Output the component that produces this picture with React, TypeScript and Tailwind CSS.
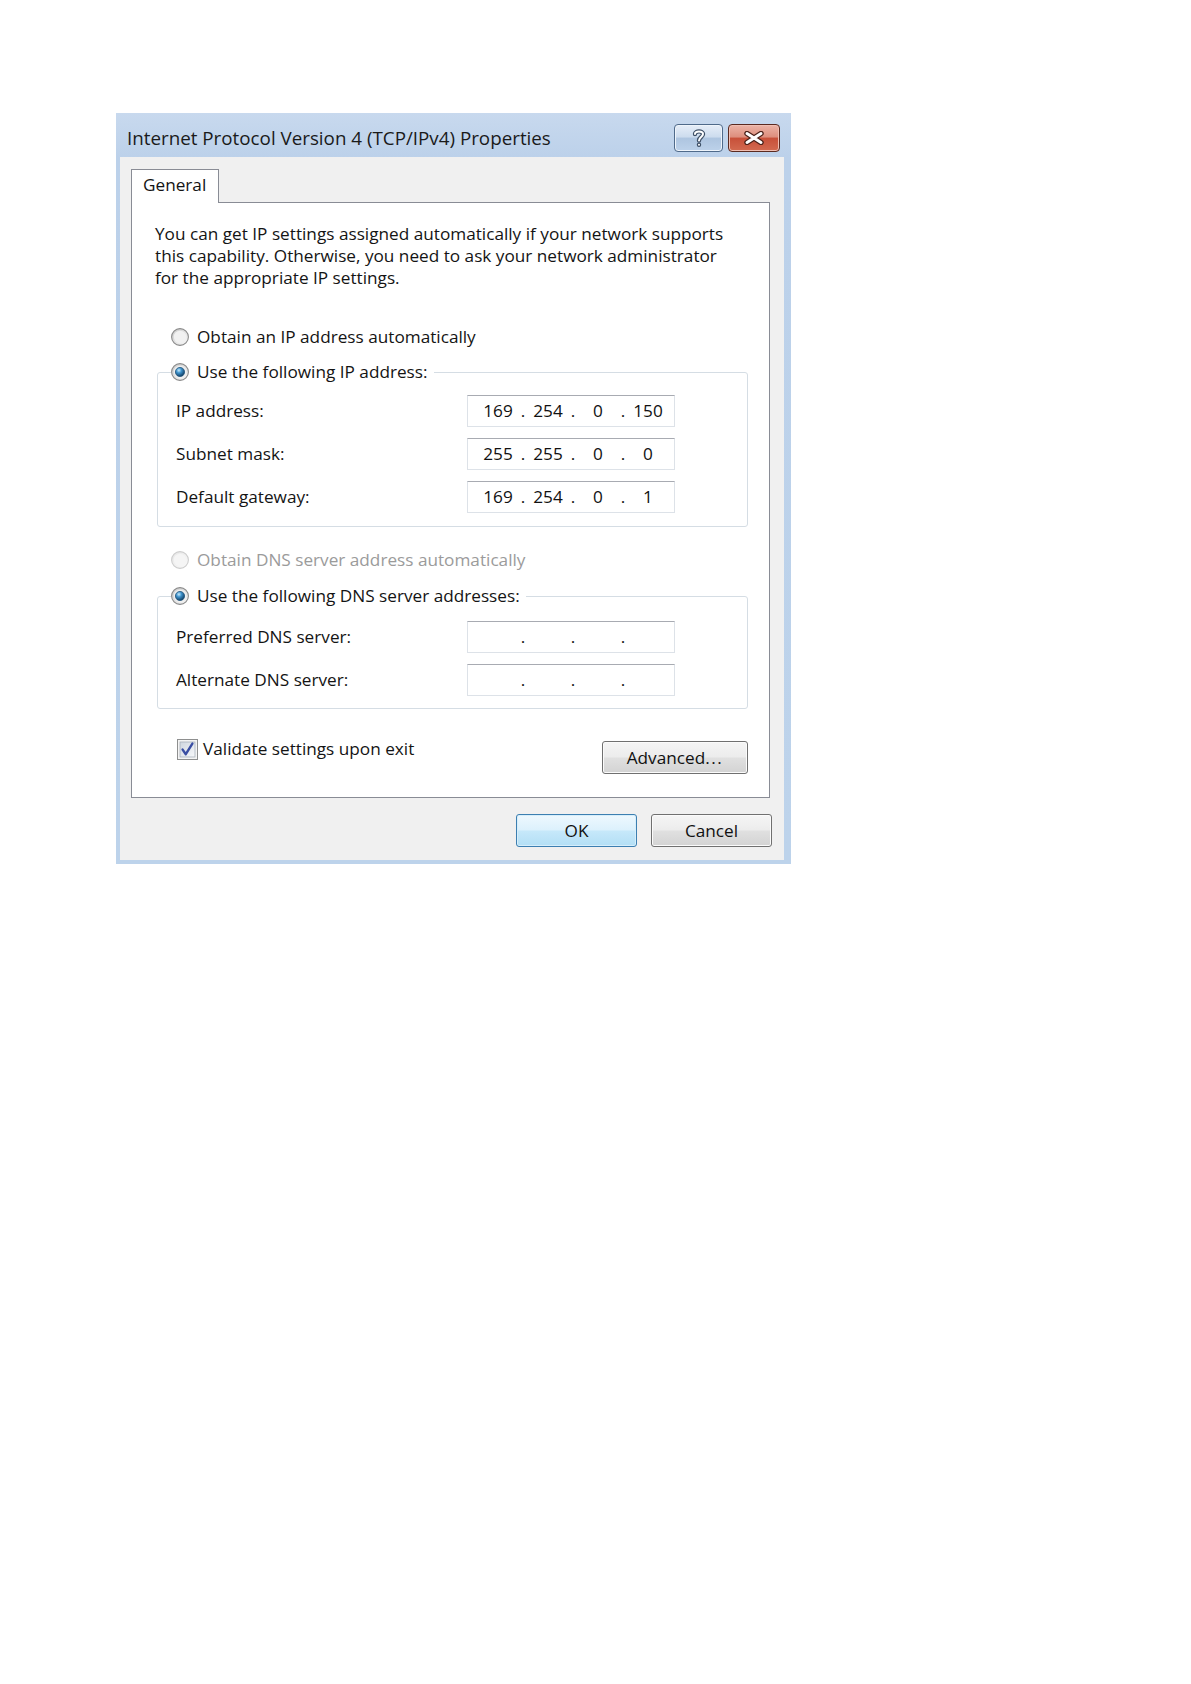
import React from "react";

function Radio({ checked = false, disabled = false }: { checked?: boolean; disabled?: boolean }) {
  return (
    <svg width="18" height="18" viewBox="0 0 18 18" className="shrink-0">
      <defs>
        <linearGradient id="rfill" x1="0" y1="0" x2="1" y2="1">
          <stop offset="0" stopColor="#c9c9c9" />
          <stop offset="1" stopColor="#fafafa" />
        </linearGradient>
        <linearGradient id="rfilldis" x1="0" y1="0" x2="1" y2="1">
          <stop offset="0" stopColor="#e6e6e6" />
          <stop offset="1" stopColor="#fafafa" />
        </linearGradient>
        <radialGradient id="rdot" cx="0.38" cy="0.32" r="0.7">
          <stop offset="0" stopColor="#c9ecfd" />
          <stop offset="0.4" stopColor="#3f93cc" />
          <stop offset="1" stopColor="#0f3b60" />
        </radialGradient>
      </defs>
      <circle
        cx="9"
        cy="9"
        r="8.4"
        fill={disabled ? "url(#rfilldis)" : "url(#rfill)"}
        stroke={disabled ? "#cdcdcd" : "#8a8a8a"}
        strokeWidth="1.1"
      />
      <circle cx="9" cy="9" r="6.2" fill={disabled ? "#f5f5f5" : "#f1f1f1"} />
      {checked && <circle cx="9" cy="9" r="4.6" fill="url(#rdot)" stroke="#24577e" strokeWidth="0.8" />}
    </svg>
  );
}

function CheckBox() {
  return (
    <svg width="21" height="21" viewBox="0 0 21 21" className="shrink-0">
      <defs>
        <linearGradient id="cbfill" x1="0" y1="0" x2="1" y2="1">
          <stop offset="0" stopColor="#cfd6df" />
          <stop offset="1" stopColor="#f7f8fa" />
        </linearGradient>
      </defs>
      <rect x="0.5" y="0.5" width="20" height="20" fill="#f4f4f4" stroke="#8e8f8f" />
      <rect x="3" y="3" width="15" height="15" fill="url(#cbfill)" stroke="#a9b1bb" strokeWidth="0.8" />
      <path d="M5.6 10.6 L8.8 15.2 L15.4 4.6" fill="none" stroke="#3a4ea3" strokeWidth="2.4" strokeLinecap="round" strokeLinejoin="round" />
    </svg>
  );
}

function IpField({ parts }: { parts: string[] }) {
  return (
    <div className="flex h-[32px] w-[208px] items-center border border-[#dde2e8] border-t-[#a8abb2] bg-white pl-[10px] text-[#111]">
      {[0, 1, 2, 3].map((i) => (
        <React.Fragment key={i}>
          <span className="w-[40px] text-center">{parts[i] ?? ""}</span>
          {i < 3 && <span className="w-[10px] text-center">.</span>}
        </React.Fragment>
      ))}
    </div>
  );
}

function FieldRow({ label, parts }: { label: string; parts: string[] }) {
  return (
    <div className="flex h-[32px] items-center">
      <div className="w-[291px] whitespace-nowrap">{label}</div>
      <IpField parts={parts} />
    </div>
  );
}

function WinButton({ children, primary = false, width }: { children: React.ReactNode; primary?: boolean; width: string }) {
  return (
    <div
      className={
        primary
          ? `flex h-[33px] ${width} items-center justify-center rounded-[3px] border border-[#3c7fb1] bg-[linear-gradient(180deg,#eef8fe_0%,#dcf1fc_48%,#c6e8fa_52%,#b3dff5_100%)] shadow-[inset_0_0_0_1px_#d6eefb] text-[#111]`
          : `flex h-[33px] ${width} items-center justify-center rounded-[3px] border border-[#707070] bg-[linear-gradient(180deg,#f5f5f5_0%,#ececec_48%,#e0e0e0_52%,#d3d3d3_100%)] shadow-[inset_0_0_0_1px_#fbfbfb] text-[#111]`
      }
    >
      {children}
    </div>
  );
}

export default function App() {
  return (
    <div className="min-h-[1684px] w-full bg-white pl-[116px] pt-[113px] font-['Open_Sans',sans-serif] text-[17.2px] leading-[20px] text-[#141414]">
      <div className="flex h-[751px] w-[675px] flex-col bg-[linear-gradient(180deg,#c8d9ee_0px,#bcd1ea_44px,#bdd3eb_100%)] pb-[4px] pl-[4px] pr-[7px]">
        {/* Title bar */}
        <div className="flex h-[44px] shrink-0 items-center pl-[7px] pr-[4px] pt-[5px]">
          <div className="flex-1 whitespace-nowrap text-[18.8px] text-[#1a1a1a]">Internet Protocol Version 4 (TCP/IPv4) Properties</div>
          <div className="flex gap-[5px] pt-[1px]">
            <div className="flex h-[28px] w-[49px] items-center justify-center rounded-[4px] border border-[#4f6a8a] bg-[linear-gradient(180deg,#e6eef8_0%,#cddcee_45%,#aec5e0_52%,#bdd2ea_100%)] shadow-[inset_0_0_0_1px_#eef4fb]">
              <svg width="14" height="20" viewBox="0 0 14 20">
                <path d="M3 6 C3 2.5 11 2.5 11 6 C11 9 7 9 7 12.5" fill="none" stroke="#3d4f66" strokeWidth="4.4" strokeLinecap="round" />
                <circle cx="7" cy="16.8" r="2.2" fill="#3d4f66" />
                <path d="M3 6 C3 2.5 11 2.5 11 6 C11 9 7 9 7 12.5" fill="none" stroke="#ffffff" strokeWidth="2" strokeLinecap="round" />
                <circle cx="7" cy="16.8" r="1" fill="#ffffff" />
              </svg>
            </div>
            <div className="flex h-[28px] w-[52px] items-center justify-center rounded-[4px] border border-[#5b2a20] bg-[linear-gradient(180deg,#ecb4a7_0%,#de8f7e_45%,#c8513a_52%,#d36a50_100%)] shadow-[inset_0_0_0_1px_#f0bfb3]">
              <svg width="20" height="14" viewBox="0 0 20 14">
                <path d="M3 2.5 L17 11.5 M17 2.5 L3 11.5" fill="none" stroke="#4a2018" strokeWidth="5.4" strokeLinecap="round" />
                <path d="M3 2.5 L17 11.5 M17 2.5 L3 11.5" fill="none" stroke="#ffffff" strokeWidth="3" strokeLinecap="round" />
              </svg>
            </div>
          </div>
        </div>

        {/* Content */}
        <div className="flex flex-1 flex-col bg-[#f0f0f0] pl-[11px] pr-[12px] pt-[12px]">
          <div className="relative z-10 -mb-px flex h-[34px] w-[88px] items-center border border-b-0 border-[#898c95] bg-white pb-[4px] pl-[11px]">
            General
          </div>
          <div className="flex h-[596px] w-[639px] flex-col border border-[#898c95] bg-white pl-[23px] pt-[20px]">
            <p className="whitespace-nowrap leading-[22px]">
              You can get IP settings assigned automatically if your network supports
              <br />
              this capability. Otherwise, you need to ask your network administrator
              <br />
              for the appropriate IP settings.
            </p>

            <div className="ml-[16px] mt-[38px] flex h-[20px] items-center gap-[8px]">
              <Radio />
              <span className="whitespace-nowrap">Obtain an IP address automatically</span>
            </div>

            <fieldset className="ml-[2px] mt-[15px] w-[591px] rounded-[3px] border border-[#d5dde4]">
              <legend className="ml-[13px] flex h-[20px] items-center gap-[8px] pr-[6px]">
                <Radio checked />
                <span className="whitespace-nowrap">Use the following IP address:</span>
              </legend>
              <div className="flex flex-col gap-[11px] pb-[13px] pl-[18px] pt-[13px]">
                <FieldRow label="IP address:" parts={["169", "254", "0", "150"]} />
                <FieldRow label="Subnet mask:" parts={["255", "255", "0", "0"]} />
                <FieldRow label="Default gateway:" parts={["169", "254", "0", "1"]} />
              </div>
            </fieldset>

            <div className="ml-[16px] mt-[23px] flex h-[20px] items-center gap-[8px]">
              <Radio disabled />
              <span className="whitespace-nowrap text-[#9b9b9b]">Obtain DNS server address automatically</span>
            </div>

            <fieldset className="ml-[2px] mt-[16px] w-[591px] rounded-[3px] border border-[#d5dde4]">
              <legend className="ml-[13px] flex h-[20px] items-center gap-[8px] pr-[6px]">
                <Radio checked />
                <span className="whitespace-nowrap">Use the following DNS server addresses:</span>
              </legend>
              <div className="flex flex-col gap-[11px] pb-[12px] pl-[18px] pt-[15px]">
                <FieldRow label="Preferred DNS server:" parts={["", "", "", ""]} />
                <FieldRow label="Alternate DNS server:" parts={["", "", "", ""]} />
              </div>
            </fieldset>

            <div className="ml-[22px] mt-[29px] flex w-[571px] items-start justify-between">
              <div className="flex h-[22px] items-center gap-[5px]">
                <CheckBox />
                <span className="whitespace-nowrap">Validate settings upon exit</span>
              </div>
              <div className="mt-[3px]">
                <WinButton width="w-[146px]">
                  <span>
                    Advanced<span className="tracking-[1.5px]">...</span>
                  </span>
                </WinButton>
              </div>
            </div>
          </div>

          <div className="mt-[16px] flex justify-end gap-[14px]">
            <WinButton primary width="w-[121px]">
              OK
            </WinButton>
            <WinButton width="w-[121px]">Cancel</WinButton>
          </div>
        </div>
      </div>
    </div>
  );
}
